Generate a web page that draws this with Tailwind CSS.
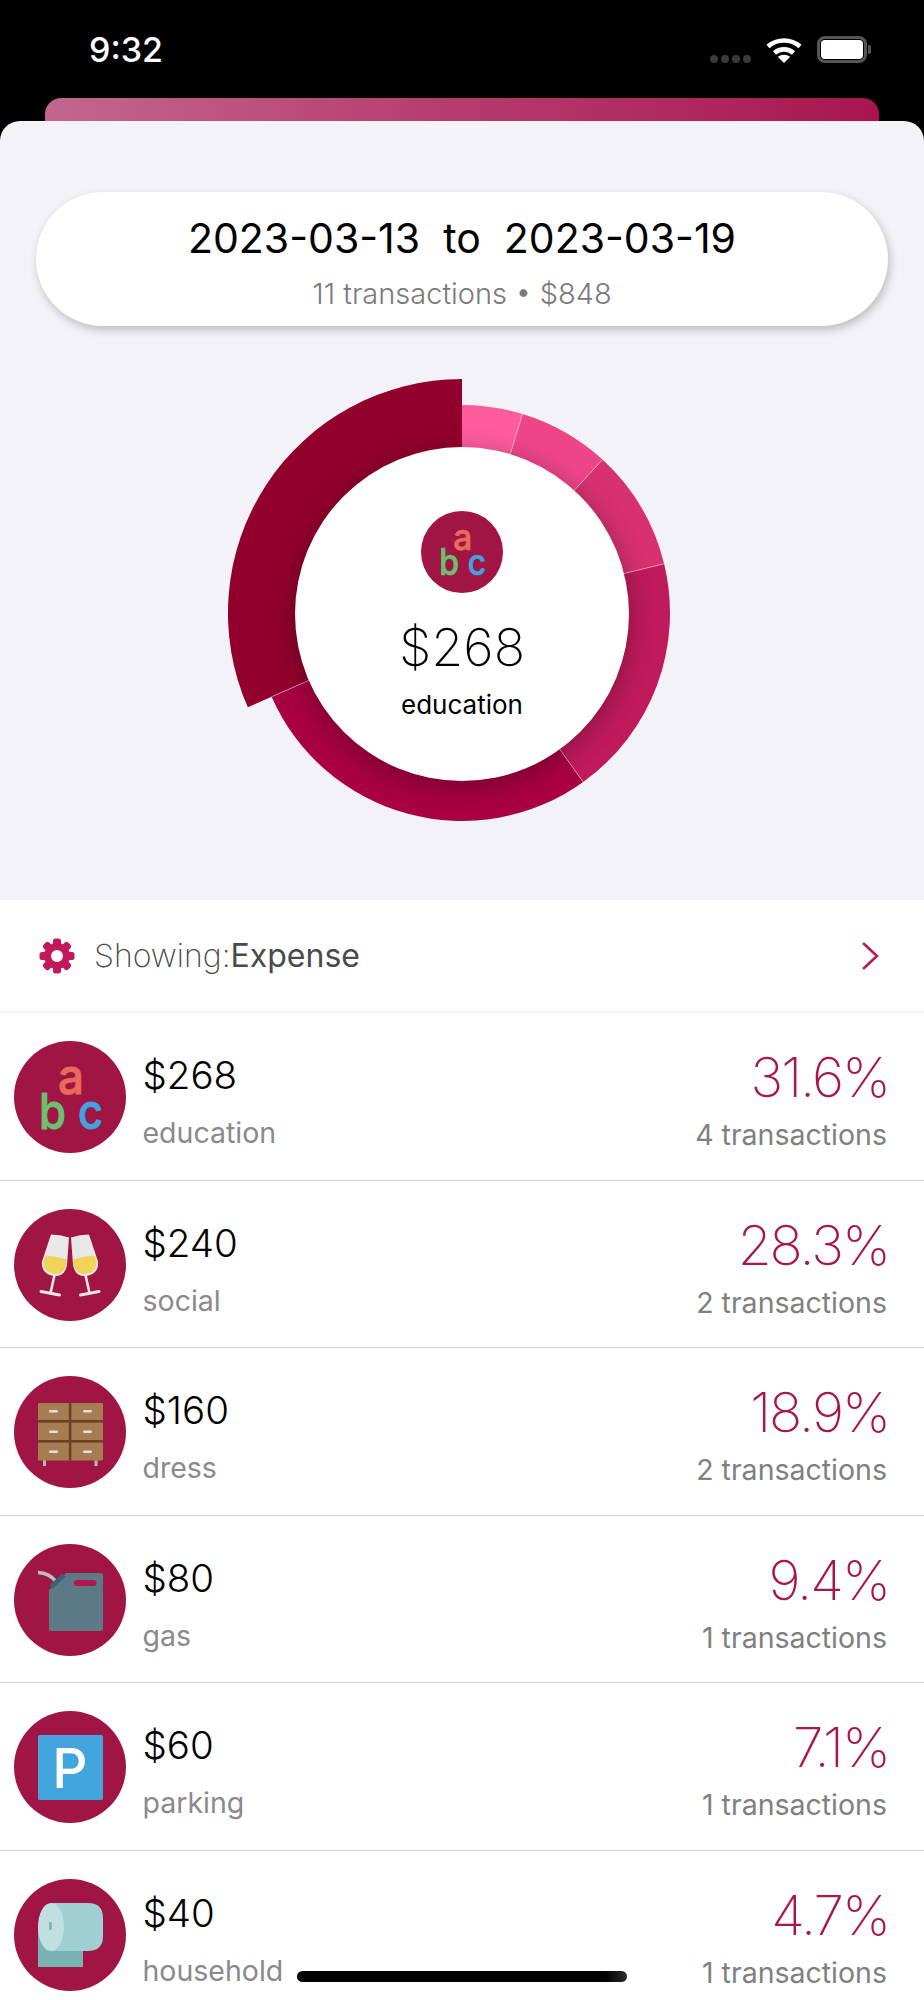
<!DOCTYPE html>
<html lang="en">
  <head>
    <meta charset="UTF-8" />
    <meta name="viewport" content="width=device-width, initial-scale=1.0" />
    <title>Weekly report</title>
    <script src="https://cdn.jsdelivr.net/npm/@tailwindcss/browser@4"></script>
  </head>
  <body class="bg-black">
    <div class="relative h-[2000px] w-[924px] overflow-hidden bg-black [font-family:Inter,sans-serif]">
      <!-- status bar -->
      <div class="flex h-[98px] items-start justify-between pl-[89px] pr-[53px] text-white">
        <div class="mt-[29px] text-[34px] leading-[42px] font-medium">9:32</div>
        <div class="mt-[36px] flex items-start">
          <div class="mt-[19px] flex gap-[3px]">
            <span class="size-[8px] rounded-full bg-[#3a3a3a]"></span>
            <span class="size-[8px] rounded-full bg-[#3a3a3a]"></span>
            <span class="size-[8px] rounded-full bg-[#3a3a3a]"></span>
            <span class="size-[8px] rounded-full bg-[#3a3a3a]"></span>
          </div>
          <svg class="ml-[15px] mt-[1px]" width="36" height="26" viewBox="0 0 36 26" fill="none" stroke="#fff" stroke-width="4.6">
            <path d="M2 9.5C11 1.5 25 1.5 34 9.5" />
            <path d="M8.5 16C14 11.2 22 11.2 27.5 16" />
            <path d="M18 26L11.8 19.8C15.2 17 20.8 17 24.2 19.8Z" fill="#fff" stroke="none" />
          </svg>
          <div class="ml-[15px] flex items-center">
            <div class="h-[27px] w-[50px] rounded-[8px] border-[3px] border-[#555] p-[1px]">
              <div class="h-full w-full rounded-[4px] bg-white"></div>
            </div>
            <div class="ml-[1px] h-[9px] w-[3px] rounded-r-[2px] bg-[#555]"></div>
          </div>
        </div>
      </div>

      <div class="mx-[45px] h-[23px] rounded-t-[16px] bg-gradient-to-r from-[#c2668d] via-[#b53a6e] to-[#a8144f]"></div>

      <!-- summary sheet -->
      <div class="h-[779px] rounded-t-[20px] bg-[#f2f2f7] pt-[71px]">
        <div class="mx-[36px] flex h-[134px] flex-col items-center rounded-[67px] bg-white shadow-[2px_4px_10px_rgba(0,0,0,0.22)]">
          <div class="mt-[21px] whitespace-pre text-[41px] leading-[50px] text-black">2023-03-13  to  2023-03-19</div>
          <div class="mt-[14px] text-[29px] leading-[34px] font-light text-[#7a7a7a]">11 transactions • $848</div>
        </div>

        <!-- donut -->
        <div class="relative mx-auto mt-[47px] size-[480px]">
          <svg class="absolute inset-0" width="480" height="480" viewBox="0 0 480 480">
            <path fill="#ff5c9d" d="M240 240L240 32A208 208 0 0 1 300.5 41Z" />
            <path fill="#ee4589" d="M240 240L300.5 41A208 208 0 0 1 380.5 86.6Z" />
            <path fill="#d7316f" d="M240 240L380.5 86.6A208 208 0 0 1 442.1 190.8Z" />
            <path fill="#bf1a5b" d="M240 240L442.1 190.8A208 208 0 0 1 361.2 409Z" />
            <path fill="#a80041" d="M240 240L361.2 409A208 208 0 0 1 49.6 323.8Z" />
            <path fill="#92002d" d="M240 240L25.8 334.3A234 234 0 0 1 240 6Z" />
            <g stroke="#fff" stroke-opacity="0.45" stroke-width="1">
              <path d="M240 240L300.5 41" />
              <path d="M240 240L380.5 86.6" />
              <path d="M240 240L442.1 190.8" />
              <path d="M240 240L361.2 409" />
              <path d="M240 240L49.6 323.8" />
            </g>
          </svg>
          <div class="absolute left-[73px] top-[74px] flex size-[334px] flex-col items-center rounded-full bg-white shadow-[0_5px_26px_rgba(0,0,0,0.3)]">
            <svg class="mt-[64px]" width="82" height="82" viewBox="0 0 112 112">
              <circle cx="56" cy="56" r="56" fill="#a01543" />
              <g font-family="Inter, sans-serif" font-size="50" font-weight="500" stroke-width="1" stroke-linejoin="round">
                <text x="44" y="53" fill="#e96a5c" stroke="#e96a5c" textLength="26" lengthAdjust="spacingAndGlyphs">a</text>
                <text x="25" y="88" fill="#6cc070" stroke="#6cc070" textLength="27" lengthAdjust="spacingAndGlyphs">b</text>
                <text x="64" y="88" fill="#3fa3df" stroke="#3fa3df" textLength="25" lengthAdjust="spacingAndGlyphs">c</text>
              </g>
            </svg>
            <div class="mt-[25px] text-[52px] leading-[60px] font-extralight text-black">$268</div>
            <div class="mt-[11px] text-[26px] leading-[32px] text-black">education</div>
          </div>
        </div>
      </div>

      <!-- list -->
      <div class="bg-white">
        <div class="flex h-[113px] items-center border-b-2 border-[#f2f2f7] pl-[39px] pr-[41px]">
          <svg width="36" height="36" viewBox="0 0 36 36" fill="#c2185b">
            <g>
              <rect x="14" y="0.5" width="8" height="35" rx="2.5" />
              <rect x="14" y="0.5" width="8" height="35" rx="2.5" transform="rotate(45 18 18)" />
              <rect x="14" y="0.5" width="8" height="35" rx="2.5" transform="rotate(90 18 18)" />
              <rect x="14" y="0.5" width="8" height="35" rx="2.5" transform="rotate(135 18 18)" />
            </g>
            <circle cx="18" cy="18" r="13" />
            <circle cx="18" cy="18" r="6" fill="#fff" />
          </svg>
          <div class="ml-[19px] text-[32px] leading-[38px] text-[#4a4a4a]"><span class="font-extralight">Showing:</span><span>Expense</span></div>
          <svg class="ml-auto" width="24" height="32" viewBox="0 0 24 32" fill="none" stroke="#c2185b" stroke-width="2.6">
            <path d="M4 3L18 16L4 29" />
          </svg>
        </div>

        <!-- education -->
        <div class="flex h-[167.5px] items-center border-b border-[#d4d4d4] pl-[13.5px] pr-[37px]">
          <svg class="mt-[2px]" width="112" height="112" viewBox="0 0 112 112">
            <circle cx="56" cy="56" r="56" fill="#a01543" />
            <g font-family="Inter, sans-serif" font-size="50" font-weight="500" stroke-width="1" stroke-linejoin="round">
              <text x="44" y="53" fill="#e96a5c" stroke="#e96a5c" textLength="26" lengthAdjust="spacingAndGlyphs">a</text>
              <text x="25" y="88" fill="#6cc070" stroke="#6cc070" textLength="27" lengthAdjust="spacingAndGlyphs">b</text>
              <text x="64" y="88" fill="#3fa3df" stroke="#3fa3df" textLength="25" lengthAdjust="spacingAndGlyphs">c</text>
            </g>
          </svg>
          <div class="ml-[17px] pt-[10px]">
            <div class="text-[38.5px] leading-[46px] font-light text-black">$268</div>
            <div class="mt-[18px] text-[28.5px] leading-[34px] text-[#8a8a8e]">education</div>
          </div>
          <div class="ml-auto pt-[9px] text-right">
            <div class="-mr-[2px] text-[55px] leading-[56px] font-extralight tracking-[-2px] text-[#a9164b]">31.6%</div>
            <div class="mt-[13px] text-[28.5px] leading-[34px] text-[#808080]">4 transactions</div>
          </div>
        </div>

        <!-- social -->
        <div class="flex h-[167.5px] items-center border-b border-[#d4d4d4] pl-[13.5px] pr-[37px]">
          <svg class="mt-[2px]" width="112" height="112" viewBox="0 0 112 112">
            <circle cx="56" cy="56" r="56" fill="#a01543" />
            <g>
              <path fill="#e8e8e8" d="M37 25.5Q46 25.5 55 28.5L53 56Q51 67 41.5 67Q27 66 28 52.5Z" />
              <path fill="#f0d35a" d="M31.5 46.5Q42 47 52.8 50.5L52.5 56Q50 65 41.5 65Q29 64 29.5 53Z" />
              <path fill="none" stroke="#e8e8e8" stroke-width="2.6" d="M40.5 66L36.5 84" />
              <path fill="none" stroke="#e8e8e8" stroke-width="3" stroke-linecap="round" d="M27 82.5L45.5 86" />
            </g>
            <g transform="translate(112 0) scale(-1 1)">
              <path fill="#e8e8e8" d="M37 25.5Q46 25.5 55 28.5L53 56Q51 67 41.5 67Q27 66 28 52.5Z" />
              <path fill="#f0d35a" d="M31.5 46.5Q42 47 52.8 50.5L52.5 56Q50 65 41.5 65Q29 64 29.5 53Z" />
              <path fill="none" stroke="#e8e8e8" stroke-width="2.6" d="M40.5 66L36.5 84" />
              <path fill="none" stroke="#e8e8e8" stroke-width="3" stroke-linecap="round" d="M27 82.5L45.5 86" />
            </g>
          </svg>
          <div class="ml-[17px] pt-[10px]">
            <div class="text-[38.5px] leading-[46px] font-light text-black">$240</div>
            <div class="mt-[18px] text-[28.5px] leading-[34px] text-[#8a8a8e]">social</div>
          </div>
          <div class="ml-auto pt-[9px] text-right">
            <div class="-mr-[2px] text-[55px] leading-[56px] font-extralight tracking-[-2px] text-[#a9164b]">28.3%</div>
            <div class="mt-[13px] text-[28.5px] leading-[34px] text-[#808080]">2 transactions</div>
          </div>
        </div>

        <!-- dress -->
        <div class="flex h-[167.5px] items-center border-b border-[#d4d4d4] pl-[13.5px] pr-[37px]">
          <svg class="mt-[2px]" width="112" height="112" viewBox="0 0 112 112">
            <circle cx="56" cy="56" r="56" fill="#a01543" />
            <rect x="29" y="83" width="3" height="7" fill="#b8b8b8" />
            <rect x="80.5" y="83" width="3" height="7" fill="#b8b8b8" />
            <rect x="24" y="27" width="65" height="57.5" rx="1" fill="#a67c52" />
            <rect x="54.8" y="27" width="2.6" height="57.5" fill="#6b4226" />
            <rect x="24" y="44" width="65" height="2.6" fill="#6b4226" />
            <rect x="24" y="64" width="65" height="2.6" fill="#6b4226" />
            <g fill="#e0e0e0">
              <rect x="35" y="34" width="9" height="2.4" rx="1.2" />
              <rect x="69" y="34" width="9" height="2.4" rx="1.2" />
              <rect x="35" y="54.5" width="9" height="2.4" rx="1.2" />
              <rect x="69" y="54.5" width="9" height="2.4" rx="1.2" />
              <rect x="35" y="74.5" width="9" height="2.4" rx="1.2" />
              <rect x="69" y="74.5" width="9" height="2.4" rx="1.2" />
            </g>
          </svg>
          <div class="ml-[17px] pt-[10px]">
            <div class="text-[38.5px] leading-[46px] font-light text-black">$160</div>
            <div class="mt-[18px] text-[28.5px] leading-[34px] text-[#8a8a8e]">dress</div>
          </div>
          <div class="ml-auto pt-[9px] text-right">
            <div class="-mr-[2px] text-[55px] leading-[56px] font-extralight tracking-[-2px] text-[#a9164b]">18.9%</div>
            <div class="mt-[13px] text-[28.5px] leading-[34px] text-[#808080]">2 transactions</div>
          </div>
        </div>

        <!-- gas -->
        <div class="flex h-[167.5px] items-center border-b border-[#d4d4d4] pl-[13.5px] pr-[37px]">
          <svg class="mt-[2px]" width="112" height="112" viewBox="0 0 112 112">
            <circle cx="56" cy="56" r="56" fill="#a01543" />
            <path fill="none" stroke="#bdbdbd" stroke-width="3.6" d="M24 28.5Q35 29 41.5 37" />
            <path fill="#5b7a85" d="M52 29H86Q89 29 89 32V85Q89 87 87 87H37Q35 87 35 85V46Z" />
            <path stroke="#3f6072" stroke-width="4.5" d="M37 43L50 31" />
            <rect x="60" y="36" width="22.5" height="6" rx="3" fill="#b0174f" />
          </svg>
          <div class="ml-[17px] pt-[10px]">
            <div class="text-[38.5px] leading-[46px] font-light text-black">$80</div>
            <div class="mt-[18px] text-[28.5px] leading-[34px] text-[#8a8a8e]">gas</div>
          </div>
          <div class="ml-auto pt-[9px] text-right">
            <div class="-mr-[2px] text-[55px] leading-[56px] font-extralight tracking-[-2px] text-[#a9164b]">9.4%</div>
            <div class="mt-[13px] text-[28.5px] leading-[34px] text-[#808080]">1 transactions</div>
          </div>
        </div>

        <!-- parking -->
        <div class="flex h-[167.5px] items-center border-b border-[#d4d4d4] pl-[13.5px] pr-[37px]">
          <svg class="mt-[2px]" width="112" height="112" viewBox="0 0 112 112">
            <circle cx="56" cy="56" r="56" fill="#a01543" />
            <rect x="24" y="24" width="65" height="65" rx="1.5" fill="#42a5de" />
            <text x="56" y="77" text-anchor="middle" fill="#fff" font-family="Inter, sans-serif" font-size="55" font-weight="500">P</text>
          </svg>
          <div class="ml-[17px] pt-[10px]">
            <div class="text-[38.5px] leading-[46px] font-light text-black">$60</div>
            <div class="mt-[18px] text-[28.5px] leading-[34px] text-[#8a8a8e]">parking</div>
          </div>
          <div class="ml-auto pt-[9px] text-right">
            <div class="-mr-[2px] text-[55px] leading-[56px] font-extralight tracking-[-2px] text-[#a9164b]">7.1%</div>
            <div class="mt-[13px] text-[28.5px] leading-[34px] text-[#808080]">1 transactions</div>
          </div>
        </div>

        <!-- household -->
        <div class="flex h-[167.5px] items-center pl-[13.5px] pr-[37px]">
          <svg class="mt-[2px]" width="112" height="112" viewBox="0 0 112 112">
            <circle cx="56" cy="56" r="56" fill="#a01543" />
            <rect x="24" y="47" width="45" height="41" fill="#7ab3b3" />
            <path fill="#9fcfd3" d="M37 24H74Q89 24 89 39V57Q89 72 74 72H37Z" />
            <ellipse cx="37" cy="48" rx="13" ry="24" fill="#bfdfe1" />
            <rect x="35.2" y="43" width="2.6" height="8" rx="1" fill="#7ab3b3" />
          </svg>
          <div class="ml-[17px] pt-[10px]">
            <div class="text-[38.5px] leading-[46px] font-light text-black">$40</div>
            <div class="mt-[18px] text-[28.5px] leading-[34px] text-[#8a8a8e]">household</div>
          </div>
          <div class="ml-auto pt-[9px] text-right">
            <div class="-mr-[2px] text-[55px] leading-[56px] font-extralight tracking-[-2px] text-[#a9164b]">4.7%</div>
            <div class="mt-[13px] text-[28.5px] leading-[34px] text-[#808080]">1 transactions</div>
          </div>
        </div>
      </div>

      <!-- home indicator -->
      <div class="absolute bottom-[18px] left-[297px] h-[11px] w-[330px] rounded-full bg-gradient-to-r from-black via-black via-90% to-[#2c2c2c]"></div>
    </div>
  </body>
</html>
